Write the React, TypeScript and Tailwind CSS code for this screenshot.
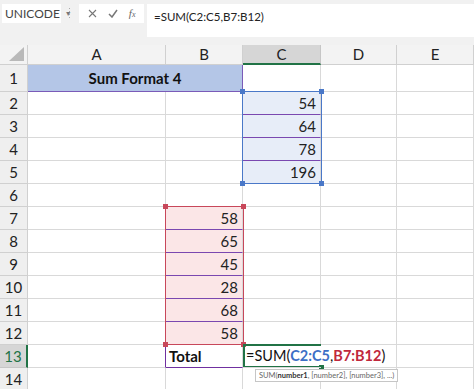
import React from 'react';

const colW = ['w-[138px]', 'w-[77px]', 'w-[78px]', 'w-[76px]', 'w-[77px]'];
const letters = ['A', 'B', 'C', 'D', 'E'];

const grid = 'border-r border-b border-[#d9d9d9]';

const RowHead = ({ n, active = false }: { n: number; active?: boolean }) => (
  <div
    className={
      active
        ? 'w-[28px] shrink-0 flex items-center justify-center bg-[#d6d6d6] text-[#217346] border-b border-[#c6c6c6] border-r-2 border-r-[#217346] text-[15px]'
        : 'w-[28px] shrink-0 flex items-center justify-center bg-[#efefef] text-[#222] border-b border-r border-[#d0d0d0] text-[15px]'
    }
  >
    {n}
  </div>
);

const Handle = ({ className }: { className: string }) => (
  <div className={`absolute w-[5px] h-[5px] ${className}`} />
);

export default function App() {
  const cNums: Record<number, string> = { 2: '54', 3: '64', 4: '78', 5: '196' };
  const bNums: Record<number, string> = { 7: '58', 8: '65', 9: '45', 10: '28', 11: '68', 12: '58' };

  const rows = [];
  for (let r = 2; r <= 14; r++) {
    const cells = [];
    // A
    cells.push(
      <div key="a" className={`${colW[0]} ${grid} ${r === 13 ? 'border-r-[#7030a0]' : ''}`} />
    );
    // B
    if (bNums[r]) {
      cells.push(
        <div
          key="b"
          className={`${colW[1]} ${grid} bg-[#fbe6e7] flex items-center justify-end pr-[4px] text-[15px] text-[#222] ${r < 12 ? 'border-b-[#7a48b0]' : ''}`}
        >
          {bNums[r]}
        </div>
      );
    } else if (r === 13) {
      cells.push(
        <div
          key="b"
          className={`${colW[1]} ${grid} border-b-[#7030a0] flex items-center pl-[3px] text-[15px] font-bold text-[#111]`}
        >
          Total
        </div>
      );
    } else {
      cells.push(<div key="b" className={`${colW[1]} ${grid}`} />);
    }
    // C
    if (cNums[r]) {
      cells.push(
        <div
          key="c"
          className={`${colW[2]} ${grid} bg-[#e7edf8] flex items-center justify-end pr-[4px] text-[15px] text-[#222] ${r < 5 ? 'border-b-[#7a48b0]' : ''}`}
        >
          {cNums[r]}
        </div>
      );
    } else if (r === 13) {
      cells.push(
        <div
          key="c"
          className={`${colW[2]} border-b border-[#d9d9d9] relative z-10 flex items-center pl-[3px] whitespace-nowrap text-[14.5px] text-[#111]`}
        >
          =SUM(<span className="text-[#3d6fc6] font-bold">C2:C5</span>,
          <span className="text-[#c0283c] font-bold">B7:B12</span>)
        </div>
      );
    } else {
      cells.push(<div key="c" className={`${colW[2]} ${grid}`} />);
    }
    cells.push(<div key="d" className={`${colW[3]} ${grid}`} />);
    cells.push(<div key="e" className={`${colW[4]} ${grid}`} />);

    rows.push(
      <div key={r} className="flex h-[23px]">
        <RowHead n={r} active={r === 13} />
        {cells}
      </div>
    );
  }

  return (
    <div className="relative w-[474px] h-[389px] overflow-hidden bg-white font-['Lato','Open_Sans',sans-serif]">
      {/* formula bar */}
      <div className="h-[45px] bg-[#f1f1f1] flex items-start pt-[4px]">
        <div className="ml-[2px] w-[59px] h-[19px] bg-white flex items-center pl-[3px] text-[12px] text-[#444]">
          UNICODE
          <span className="ml-[5px] text-[7px] text-[#777]">▼</span>
        </div>
        <div className="ml-[8px] mt-[4px] flex flex-col gap-[2px]">
          <div className="w-[1px] h-[1px] bg-[#aaa]" />
          <div className="w-[1px] h-[1px] bg-[#aaa]" />
          <div className="w-[1px] h-[1px] bg-[#aaa]" />
          <div className="w-[1px] h-[1px] bg-[#aaa]" />
        </div>
        <div className="ml-[9px] w-[65px] h-[19px] bg-white flex items-center justify-around px-[3px] text-[#777]">
          <svg width="9" height="9" viewBox="0 0 9 9">
            <path d="M1 1 L8 8 M8 1 L1 8" stroke="#777" strokeWidth="1.1" />
          </svg>
          <svg width="10" height="9" viewBox="0 0 10 9">
            <path d="M1 5 L4 8 L9 1" stroke="#777" strokeWidth="1.5" fill="none" />
          </svg>
          <span className="italic font-['Liberation_Serif',serif] text-[11px] text-[#666]">
            f<span className="text-[8px]">x</span>
          </span>
        </div>
        <div className="ml-[3px] flex-1 h-[33px] bg-white pl-[7px] pt-[4px] text-[11.5px] text-[#222] whitespace-nowrap">
          =SUM(C2:C5,B7:B12)
        </div>
      </div>

      {/* column headers */}
      <div className="flex h-[20px] bg-[#f3f3f3]">
        <div className="w-[28px] shrink-0 border-r border-b border-[#d0d0d0] flex items-end justify-end pr-[3px] pb-[3px]">
          <svg width="15" height="14" viewBox="0 0 15 14">
            <path d="M15 0 L15 14 L0 14 Z" fill="#b9b9b9" />
          </svg>
        </div>
        {letters.map((l, i) => (
          <div
            key={l}
            className={
              l === 'C'
                ? `${colW[i]} bg-[#d6d6d6] border-r border-[#c6c6c6] border-b-2 border-b-[#217346] flex items-center justify-center text-[15px] text-[#222]`
                : `${colW[i]} border-r border-b border-[#d0d0d0] flex items-center justify-center text-[15px] text-[#222]`
            }
          >
            {l}
          </div>
        ))}
      </div>

      {/* row 1 */}
      <div className="flex h-[27px]">
        <RowHead n={1} />
        <div className="w-[215px] bg-[#b4c6e7] border-r border-b border-[#7a5bb8] flex items-center justify-center text-[15px] font-bold text-[#111]">
          Sum Format 4
        </div>
        <div className={`${colW[2]} ${grid}`} />
        <div className={`${colW[3]} ${grid}`} />
        <div className={`${colW[4]} ${grid}`} />
      </div>

      {rows}

      {/* range highlight C2:C5 */}
      <div className="absolute left-[242px] top-[91px] w-[80px] h-[93px] border border-[#4a78c8] pointer-events-none" />
      <Handle className="left-[240px] top-[89px] bg-[#4a78c8]" />
      <Handle className="left-[319px] top-[89px] bg-[#4a78c8]" />
      <Handle className="left-[240px] top-[181px] bg-[#4a78c8]" />
      <Handle className="left-[319px] top-[181px] bg-[#4a78c8]" />

      {/* range highlight B7:B12 */}
      <div className="absolute left-[165px] top-[206px] w-[79px] h-[139px] border border-[#c8475a] pointer-events-none" />
      <Handle className="left-[163px] top-[204px] bg-[#c8475a]" />
      <Handle className="left-[241px] top-[204px] bg-[#c8475a]" />
      <Handle className="left-[163px] top-[342px] bg-[#c8475a]" />
      <Handle className="left-[241px] top-[342px] bg-[#c8475a]" />

      {/* active cell C13 */}
      <div className="absolute left-[243px] top-[344px] w-[78px] h-[24px] border-2 border-r-0 border-[#217346] pointer-events-none" />
      <div className="absolute left-[319px] top-[365px] w-[5px] h-[5px] bg-[#217346]" />

      {/* function tooltip */}
      <div className="absolute left-[255px] top-[369px] h-[13px] px-[3px] bg-white border border-[#c6c6c6] flex items-center text-[7.5px] text-[#666] whitespace-nowrap">
        SUM(<span className="font-bold text-[#333]">number1</span>, [number2], [number3], ...)
      </div>
    </div>
  );
}
